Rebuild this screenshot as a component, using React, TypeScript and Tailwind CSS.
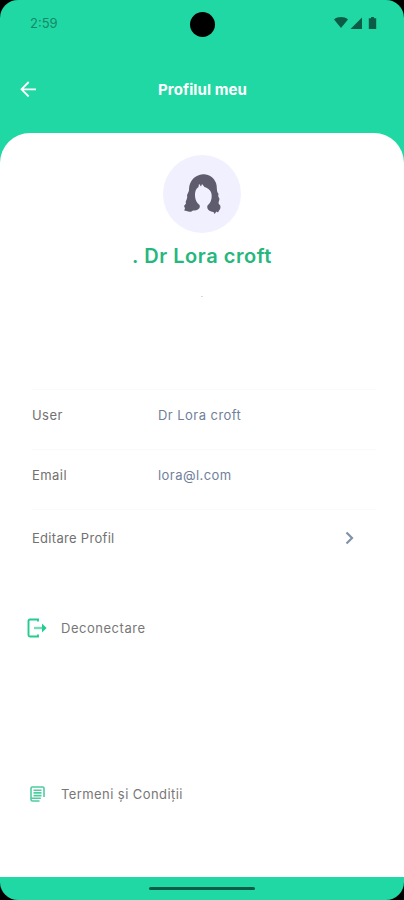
import type { ReactNode } from 'react'

function StatusBar() {
  return (
    <div className="relative flex h-[46px] items-center justify-between pl-[30px] pr-[26px] text-[#0b5c46]">
      <span className="text-[13px] leading-4 text-[#148a68]">2:59</span>
      <div className="absolute left-[190px] top-[12px] size-[25px] rounded-full bg-black" />
      <svg width="44" height="14" viewBox="0 0 44 14" fill="currentColor">
        <path d="M0 3.4C4 0.2 10 0.2 14 3.4L7 12Z" />
        <path d="M28 1.5V13H16.5Z" />
        <path d="M37 1h3v1.2h2.2V13h-7.4V2.2H37Z" />
      </svg>
    </div>
  )
}

function Header() {
  return (
    <header className="grid h-[87px] grid-cols-[60px_1fr_60px] items-start pt-[34px] text-white">
      <button aria-label="Înapoi" className="pl-5">
        <svg width="17" height="18" viewBox="0 0 17 18" fill="none" stroke="currentColor" strokeWidth="1.8">
          <path d="M16 9.3H2M8.7 2L1.5 9.3L8.7 16.5" />
        </svg>
      </button>
      <h1 className="pl-px text-center text-[15px] font-bold leading-5 tracking-[0.1px]">Profilul meu</h1>
    </header>
  )
}

function Avatar() {
  return (
    <div className="flex size-[78px] items-center justify-center rounded-full bg-[#f1f0fe]">
      <svg width="40" height="42" viewBox="0 0 40 42" fill="#5e5c6d">
        <path d="M21 1.2C27 0.8 32 4.5 34 10C35.2 13.5 34.5 17 35.5 19.5C37.5 21 35.5 22.5 36.8 24.5C38.5 26.5 36 28.5 36.8 31C39.5 32.5 38.5 36.5 37 37.5L36 39.5L34.5 38.5L32.5 41L31.5 39C27.5 38.5 24.3 36 25.5 32.5C28.5 30 29.8 27 29.7 22.5C29.5 17.5 26.5 15.5 22.5 14L20 11L19 13.5L17 10.8L16.5 14C13.8 16 12.8 18.5 13 23C13.2 27 14.8 29.8 17.5 32C19 35.5 15.5 37.5 11 37.5C9 39.5 6.5 38.7 4.5 38L2.2 37.5L3 35.2L2 33L4 30.5C3 28 5.5 26.5 5.2 23.5C4.5 21 7.2 19.5 7 16.5C7.2 7.5 13 1.8 21 1.2Z" />
      </svg>
    </div>
  )
}

function Row({ label, children }: { label: string; children?: ReactNode }) {
  return (
    <div className="flex h-[60px] items-center border-t border-[#fafafa] pb-[9px] text-[13px] leading-5 tracking-[0.45px]">
      <span className="w-[126px] text-[#717171]">{label}</span>
      {children}
    </div>
  )
}

export default function App() {
  return (
    <div className="h-[900px] w-[404px] bg-black font-['Inter','Roboto',sans-serif]">
      <div className="flex h-full flex-col overflow-hidden rounded-[18px] bg-[#20d8a3]">
        <StatusBar />
        <Header />

        <main className="flex h-[744px] flex-col rounded-t-[30px] bg-white">
          <section className="flex h-[256px] flex-col items-center pt-[22px]">
            <Avatar />
            <h2 className="mt-[9px] whitespace-nowrap text-[20px] font-semibold leading-7 tracking-[0.55px] text-[#25b77d]">
              . Dr Lora croft
            </h2>
            <span className="mt-[18px] text-[8px] leading-3 text-[#aaaaaa]">.</span>
          </section>

          <section className="ml-[32px] mr-[28px] h-[212px]">
            <Row label="User">
              <span className="text-[#71809a]">Dr Lora croft</span>
            </Row>
            <Row label="Email">
              <span className="text-[#71809a]">lora@l.com</span>
            </Row>
            <div className="flex h-[62px] items-center border-t border-[#fafafa] pb-[6px] text-[13px] leading-5 tracking-[0.3px]">
              <span className="text-[#717171]">Editare Profil</span>
              <svg className="ml-auto mr-[22px]" width="9" height="14" viewBox="0 0 9 14" fill="none" stroke="#8193a7" strokeWidth="2.2">
                <path d="M1.5 1.5L7 7L1.5 12.5" />
              </svg>
            </div>
          </section>

          <button className="ml-[27px] flex h-[54px] items-center text-[13px] tracking-[0.53px] text-[#777777]">
            <svg className="mr-[14px]" width="20" height="20" viewBox="0 0 20 20" fill="none" stroke="#25cc90" strokeWidth="1.9">
              <path d="M11 3.5V1.5H3Q1.5 1.5 1.5 3V17Q1.5 18.5 3 18.5H11V16.5" />
              <path d="M7 10H17" stroke="#73ddb7" strokeWidth="2.4" />
              <path d="M15 5.5L19.6 10L15 14.5Z" fill="#25cc90" stroke="none" />
            </svg>
            <span className="pt-px">Deconectare</span>
          </button>

          <button className="ml-[30px] mt-[112px] flex h-[54px] items-center text-[13px] tracking-[0.42px] text-[#777777]">
            <svg className="mr-[16px]" width="15" height="16" viewBox="0 0 15 16" fill="none" stroke="#50cba0" strokeWidth="1.6">
              <path d="M10.8 12.2H1V2.2Q1 1 2.2 1H12.8Q14 1 14 2.2V11M1 12V13.5Q1 15 2.5 15H9.5" />
              <path d="M3.5 4.2H11.5M3.5 6.9H11.5M3.5 9.6H11.5" />
            </svg>
            <span className="pt-[2px]">Termeni și Condiții</span>
          </button>
        </main>

        <footer className="flex flex-1 items-center justify-center">
          <div className="h-[3px] w-[106px] rounded-full bg-[#0b5c46]" />
        </footer>
      </div>
    </div>
  )
}
